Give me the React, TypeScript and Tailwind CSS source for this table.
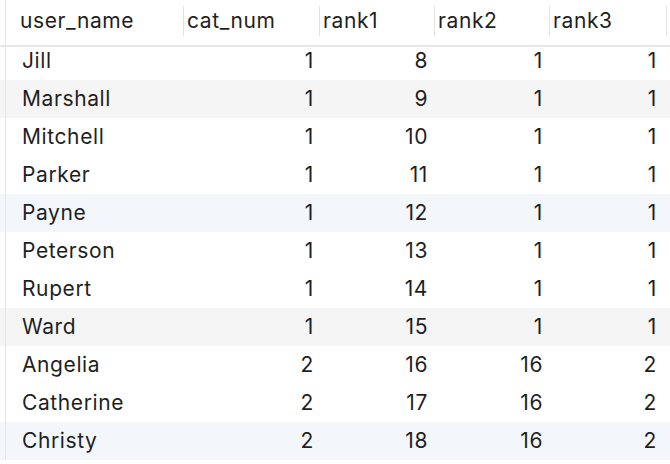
import React from "react";

type Row = { name: string; cat: number; r1: number; r2: number; r3: number; bg?: string };

const rows: Row[] = [
  { name: "Jill", cat: 1, r1: 8, r2: 1, r3: 1 },
  { name: "Marshall", cat: 1, r1: 9, r2: 1, r3: 1, bg: "gray" },
  { name: "Mitchell", cat: 1, r1: 10, r2: 1, r3: 1 },
  { name: "Parker", cat: 1, r1: 11, r2: 1, r3: 1 },
  { name: "Payne", cat: 1, r1: 12, r2: 1, r3: 1, bg: "blue" },
  { name: "Peterson", cat: 1, r1: 13, r2: 1, r3: 1 },
  { name: "Rupert", cat: 1, r1: 14, r2: 1, r3: 1 },
  { name: "Ward", cat: 1, r1: 15, r2: 1, r3: 1, bg: "gray" },
  { name: "Angelia", cat: 2, r1: 16, r2: 16, r3: 2 },
  { name: "Catherine", cat: 2, r1: 17, r2: 16, r3: 2 },
  { name: "Christy", cat: 2, r1: 18, r2: 16, r3: 2, bg: "blue" },
];

function HeaderCell({ label, w, first }: { label: string; w: string; first?: boolean }) {
  return (
    <div className={`flex items-center ${w} shrink-0`}>
      {!first && <div className="h-[30px] w-px bg-[#e3e3e3] shrink-0" />}
      <span className={first ? "pl-[14px]" : "pl-[3px]"}>{label}</span>
    </div>
  );
}

export default function App() {
  return (
    <div
      className="w-[670px] h-[464px] overflow-hidden bg-white text-[21px] tracking-[0.6px] text-[#1f1f1f] flex flex-col"
      style={{ fontFamily: "Inter, 'Noto Sans', 'Liberation Sans', sans-serif" }}
    >
      <div className="relative z-10 bg-white flex h-[47px] border-b-2 border-[#e8e8e8] shrink-0">
        <div className="w-[5px] shrink-0" />
        <div className="flex border-l border-[#e5e5e5] items-center pb-[4px]">
          <HeaderCell label="user_name" w="w-[177px]" first />
          <HeaderCell label="cat_num" w="w-[136px]" />
          <HeaderCell label="rank1" w="w-[115px]" />
          <HeaderCell label="rank2" w="w-[115px]" />
          <HeaderCell label="rank3" w="w-[117px]" />
          <div className="h-[30px] w-px bg-[#e3e3e3] shrink-0" />
        </div>
      </div>
      <div className="flex flex-col -mt-[5px]">
        {rows.map((r) => (
          <div
            key={r.name}
            className={`flex h-[38px] shrink-0 ${
              r.bg === "gray" ? "bg-[#f5f5f5]" : r.bg === "blue" ? "bg-[#f3f7fb]" : "bg-white"
            }`}
          >
            <div className="w-[5px] shrink-0" />
            <div className="flex border-l border-[#e5e5e5] items-center">
              <div className="w-[177px] shrink-0 pl-[16px]">{r.name}</div>
              <div className="w-[136px] shrink-0 text-right pr-[5px]">{r.cat}</div>
              <div className="w-[115px] shrink-0 text-right pr-[6px]">{r.r1}</div>
              <div className="w-[115px] shrink-0 text-right pr-[6px]">{r.r2}</div>
              <div className="w-[117px] shrink-0 text-right pr-[9px]">{r.r3}</div>
            </div>
          </div>
        ))}
      </div>
    </div>
  );
}
